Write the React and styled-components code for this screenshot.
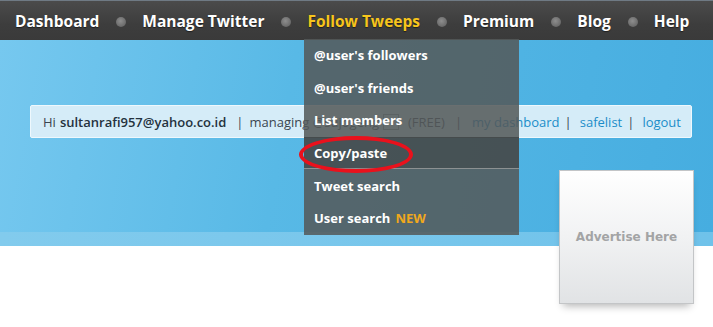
import React from 'react';
import styled, { createGlobalStyle } from 'styled-components';

const GlobalStyle = createGlobalStyle`
  html, body {
    margin: 0;
    padding: 0;
    background: #ffffff;
  }
  body {
    font-family: "Open Sans", "Liberation Sans", sans-serif;
  }
`;

const Page = styled.div`
  position: relative;
  width: 713px;
  height: 327px;
  overflow: hidden;
  background: #ffffff;
`;

const NavBar = styled.nav`
  height: 39px;
  border-top: 1px solid #6f7a84;
  background: linear-gradient(#4b4b4b, #3d3d3d 60%, #3a3a3a);
  display: flex;
  align-items: center;
  padding-left: 15px;
`;

const NavLink = styled.a`
  font-family: "Open Sans", "Liberation Sans", sans-serif;
  font-weight: 700;
  font-size: 15.5px;
  letter-spacing: 0;
  color: ${(p) => (p.$active ? '#f7c51c' : '#ffffff')};
  text-shadow: 0 1px 1px rgba(0, 0, 0, 0.5);
  text-decoration: none;
  white-space: nowrap;
`;

const Dot = styled.span`
  width: 10px;
  height: 10px;
  border-radius: 50%;
  margin: 2px 16px 0 17px;
  background: radial-gradient(circle at 45% 40%, #8e8e8e, #6a6a6a 70%, #585858);
  flex: none;
`;

const Hero = styled.div`
  height: 192px;
  background: linear-gradient(100deg, #76c8ef 0%, #58b9e6 40%, #46ade0 100%);
  padding-top: 65px;
  box-sizing: border-box;
`;

const Stripe = styled.div`
  height: 14px;
  background: linear-gradient(90deg, #82cbed, #6fc2ea);
`;

const InfoBar = styled.div`
  margin-left: 30px;
  width: 662px;
  height: 33px;
  box-sizing: border-box;
  background: #d5ecf8;
  border: 1px solid #eef8fd;
  border-radius: 2px;
  display: flex;
  align-items: center;
  padding-left: 12px;
  font-size: 13px;
  color: #3a4550;
  white-space: nowrap;
`;

const Strong = styled.b`
  font-weight: 600;
  color: #24323e;
  margin-left: 4px;
`;

const Sep = styled.span`
  color: #3a4550;
  margin: 0 ${(p) => p.$r || 8}px 0 ${(p) => p.$l || 8}px;
`;

const InfoLink = styled.a`
  color: #1b8dc9;
  text-decoration: none;
  font-weight: 500;
`;

const SelectBox = styled.span`
  display: inline-block;
  width: 14px;
  height: 14px;
  border: 1px solid #8a9aa4;
  margin: 0 9px 0 4px;
`;

const Dropdown = styled.ul`
  position: absolute;
  left: 304px;
  top: 39px;
  width: 215px;
  margin: 0;
  padding: 0;
  list-style: none;
  background: rgba(84, 88, 89, 0.86);
`;

const DropItem = styled.li`
  height: 32.6px;
  box-sizing: border-box;
  display: flex;
  align-items: center;
  padding-left: 10px;
  font-weight: 700;
  font-size: 13px;
  color: #ffffff;
  background: ${(p) => (p.$hover ? 'rgba(60, 66, 67, 0.55)' : 'transparent')};
  border-top: ${(p) => (p.$hover ? '1px solid #454b4c' : 'none')};
  border-bottom: ${(p) => (p.$hover ? '1px solid #8c9192' : 'none')};
`;

const NewTag = styled.span`
  color: #f0a81c;
  margin-left: 5px;
`;

const Circle = styled.div`
  position: absolute;
  left: 299px;
  top: 136px;
  width: 106px;
  height: 29px;
  border: 4px solid #ea111c;
  border-radius: 50%;
`;

const AdBox = styled.div`
  position: absolute;
  left: 559px;
  top: 170px;
  width: 135px;
  height: 134px;
  box-sizing: border-box;
  border: 1px solid #c3c5c7;
  background: linear-gradient(#ffffff, #f1f2f3 50%, #e1e3e5);
  display: flex;
  align-items: center;
  justify-content: center;
  font-family: "DejaVu Sans", "Liberation Sans", sans-serif;
  font-weight: 700;
  font-size: 12px;
  color: #a3a4a5;
  box-shadow: 0 6px 8px -4px rgba(0, 0, 0, 0.3);
`;

const navItems = ['Dashboard', 'Manage Twitter', 'Follow Tweeps', 'Premium', 'Blog', 'Help'];

const menu = [
  "@user's followers",
  "@user's friends",
  'List members',
  'Copy/paste',
  'Tweet search',
  'User search',
];

export default function App() {
  return (
    <>
      <GlobalStyle />
      <Page>
        <NavBar>
          {navItems.map((item, i) => (
            <React.Fragment key={item}>
              {i > 0 && <Dot />}
              <NavLink $active={item === 'Follow Tweeps'}>{item}</NavLink>
            </React.Fragment>
          ))}
        </NavBar>
        <Hero>
          <InfoBar>
            Hi<Strong>sultanrafi957@yahoo.co.id</Strong>
            <Sep $l={10} $r={6}>|</Sep>managing @sujogeng
            <SelectBox />
            (FREE)
            <Sep $l={10} $r={10}>|</Sep>
            <InfoLink>my dashboard</InfoLink>
            <Sep $l={5} $r={8}>|</Sep>
            <InfoLink>safelist</InfoLink>
            <Sep $l={5} $r={8}>|</Sep>
            <InfoLink>logout</InfoLink>
          </InfoBar>
        </Hero>
        <Stripe />
        <Dropdown>
          {menu.map((m) => (
            <DropItem key={m} $hover={m === 'Copy/paste'}>
              {m}
              {m === 'User search' && <NewTag>NEW</NewTag>}
            </DropItem>
          ))}
        </Dropdown>
        <Circle />
        <AdBox>Advertise Here</AdBox>
      </Page>
    </>
  );
}
